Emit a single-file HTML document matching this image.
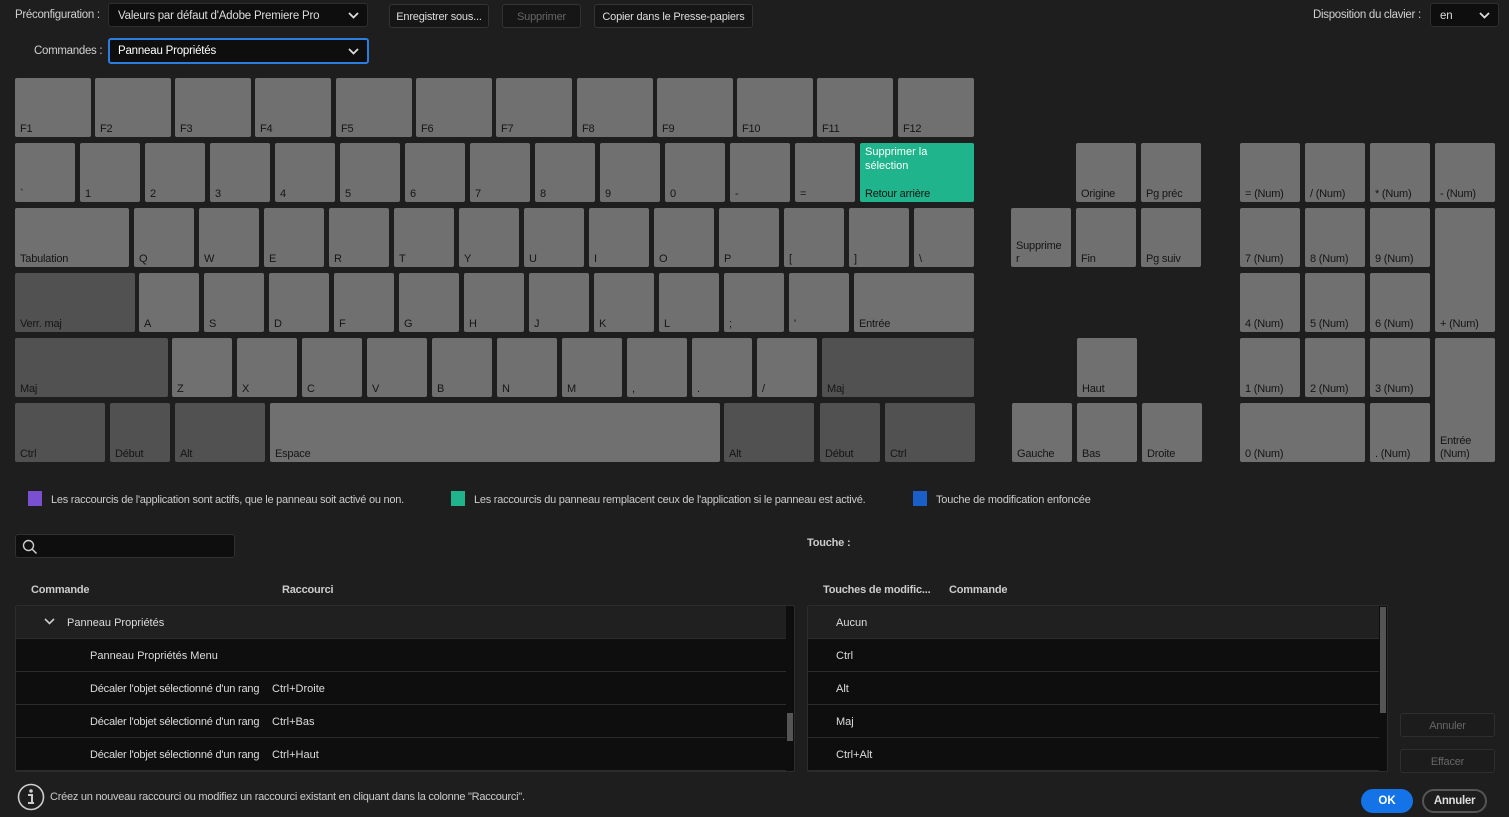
<!DOCTYPE html>
<html><head><meta charset="utf-8"><style>
*{box-sizing:border-box;margin:0;padding:0}
body{width:1509px;height:817px;background:#1e1e1e;font-family:"Liberation Sans",sans-serif;font-size:11px;color:#d0d0d0;position:relative;overflow:hidden}
.a{position:absolute}
.k{position:absolute;background:#707070;border-radius:2px;width:60px;height:59px}
.k span{position:absolute;left:5px;bottom:1px;line-height:13px;color:#151515;font-size:11px;letter-spacing:-.2px}
.d{background:#515151}
.w76{width:76px}
.dd{position:absolute;background:#0e0e0e;border:1px solid #2e2e2e;border-radius:3px;color:#ddd;font-size:11.5px;padding:6px 9px;height:24px;letter-spacing:-.2px}
.dd svg{position:absolute;right:8px;top:8px}
.btn{position:absolute;background:#161616;border:1px solid #333;border-radius:3px;color:#ddd;font-size:11px;text-align:center;line-height:24px;height:24px;letter-spacing:-.2px}
.row{position:absolute;left:0;right:8px;height:33px;border-bottom:1px solid #2c2c2c;background:#0e0e0e;color:#ddd;font-size:11px;line-height:34px}
.hd{font-weight:bold;color:#ccc;font-size:11px;letter-spacing:-.2px}
</style></head><body>
<div class="a" style="left:15px;top:9px;font-size:11.5px;letter-spacing:-.3px">Préconfiguration :</div>
<div class="dd" style="left:108px;top:3px;width:260px">Valeurs par défaut d'Adobe Premiere Pro<svg width="11" height="7"><path d="M1 1l4.5 4.5L10 1" stroke="#ddd" stroke-width="1.8" fill="none"/></svg></div>
<div class="btn" style="left:389px;top:4px;width:100px">Enregistrer sous...</div>
<div class="btn" style="left:502px;top:4px;width:79px;color:#666">Supprimer</div>
<div class="btn" style="left:594px;top:4px;width:159px">Copier dans le Presse-papiers</div>
<div class="a" style="left:1313px;top:9px;font-size:11.5px;letter-spacing:-.3px">Disposition du clavier :</div>
<div class="dd" style="left:1430px;top:3px;width:69px">en<svg width="11" height="7"><path d="M1 1l4.5 4.5L10 1" stroke="#ddd" stroke-width="1.8" fill="none"/></svg></div>
<div class="a" style="left:34px;top:45px;font-size:11.5px;letter-spacing:-.3px">Commandes :</div>
<div class="dd" style="left:108px;top:38px;width:261px;height:26px;border:2px solid #2b7de0;padding:5px 8px;color:#fff">Panneau Propriétés<svg width="11" height="7"><path d="M1 1l4.5 4.5L10 1" stroke="#ddd" stroke-width="1.8" fill="none"/></svg></div>

<div class="k w76" style="left:15px;top:78px"><span>F1</span></div>
<div class="k w76" style="left:95px;top:78px"><span>F2</span></div>
<div class="k w76" style="left:175px;top:78px"><span>F3</span></div>
<div class="k w76" style="left:255px;top:78px"><span>F4</span></div>
<div class="k w76" style="left:336px;top:78px"><span>F5</span></div>
<div class="k w76" style="left:416px;top:78px"><span>F6</span></div>
<div class="k w76" style="left:496px;top:78px"><span>F7</span></div>
<div class="k w76" style="left:577px;top:78px"><span>F8</span></div>
<div class="k w76" style="left:657px;top:78px"><span>F9</span></div>
<div class="k w76" style="left:737px;top:78px"><span>F10</span></div>
<div class="k w76" style="left:817px;top:78px"><span>F11</span></div>
<div class="k w76" style="left:898px;top:78px"><span>F12</span></div>

<div class="k" style="left:15px;top:143px"><span>`</span></div>
<div class="k" style="left:80px;top:143px"><span>1</span></div>
<div class="k" style="left:145px;top:143px"><span>2</span></div>
<div class="k" style="left:210px;top:143px"><span>3</span></div>
<div class="k" style="left:275px;top:143px"><span>4</span></div>
<div class="k" style="left:340px;top:143px"><span>5</span></div>
<div class="k" style="left:405px;top:143px"><span>6</span></div>
<div class="k" style="left:470px;top:143px"><span>7</span></div>
<div class="k" style="left:535px;top:143px"><span>8</span></div>
<div class="k" style="left:600px;top:143px"><span>9</span></div>
<div class="k" style="left:665px;top:143px"><span>0</span></div>
<div class="k" style="left:730px;top:143px"><span>-</span></div>
<div class="k" style="left:795px;top:143px"><span>=</span></div>
<div class="k" style="left:860px;top:143px;width:114px;background:#1fb48b"><div class="a" style="left:5px;top:2px;color:#fff;line-height:14px;font-size:11px">Supprimer la<br>sélection</div><span>Retour arrière</span></div>
<div class="k" style="left:1076px;top:143px"><span>Origine</span></div>
<div class="k" style="left:1141px;top:143px"><span>Pg préc</span></div>
<div class="k" style="left:1240px;top:143px"><span>= (Num)</span></div>
<div class="k" style="left:1305px;top:143px"><span>/ (Num)</span></div>
<div class="k" style="left:1370px;top:143px"><span>* (Num)</span></div>
<div class="k" style="left:1435px;top:143px"><span>- (Num)</span></div>

<div class="k" style="left:15px;top:208px;width:114px"><span>Tabulation</span></div>
<div class="k" style="left:134px;top:208px"><span>Q</span></div>
<div class="k" style="left:199px;top:208px"><span>W</span></div>
<div class="k" style="left:264px;top:208px"><span>E</span></div>
<div class="k" style="left:329px;top:208px"><span>R</span></div>
<div class="k" style="left:394px;top:208px"><span>T</span></div>
<div class="k" style="left:459px;top:208px"><span>Y</span></div>
<div class="k" style="left:524px;top:208px"><span>U</span></div>
<div class="k" style="left:589px;top:208px"><span>I</span></div>
<div class="k" style="left:654px;top:208px"><span>O</span></div>
<div class="k" style="left:719px;top:208px"><span>P</span></div>
<div class="k" style="left:784px;top:208px"><span>[</span></div>
<div class="k" style="left:849px;top:208px"><span>]</span></div>
<div class="k" style="left:914px;top:208px"><span>\</span></div>
<div class="k" style="left:1011px;top:208px"><span>Supprime<br>r</span></div>
<div class="k" style="left:1076px;top:208px"><span>Fin</span></div>
<div class="k" style="left:1141px;top:208px"><span>Pg suiv</span></div>
<div class="k" style="left:1240px;top:208px"><span>7 (Num)</span></div>
<div class="k" style="left:1305px;top:208px"><span>8 (Num)</span></div>
<div class="k" style="left:1370px;top:208px"><span>9 (Num)</span></div>
<div class="k" style="left:1435px;top:208px;height:124px"><span>+ (Num)</span></div>

<div class="k d" style="left:15px;top:273px;width:120px"><span>Verr. maj</span></div>
<div class="k" style="left:139px;top:273px"><span>A</span></div>
<div class="k" style="left:204px;top:273px"><span>S</span></div>
<div class="k" style="left:269px;top:273px"><span>D</span></div>
<div class="k" style="left:334px;top:273px"><span>F</span></div>
<div class="k" style="left:399px;top:273px"><span>G</span></div>
<div class="k" style="left:464px;top:273px"><span>H</span></div>
<div class="k" style="left:529px;top:273px"><span>J</span></div>
<div class="k" style="left:594px;top:273px"><span>K</span></div>
<div class="k" style="left:659px;top:273px"><span>L</span></div>
<div class="k" style="left:724px;top:273px"><span>;</span></div>
<div class="k" style="left:789px;top:273px"><span>'</span></div>
<div class="k" style="left:854px;top:273px;width:120px"><span>Entrée</span></div>
<div class="k" style="left:1240px;top:273px"><span>4 (Num)</span></div>
<div class="k" style="left:1305px;top:273px"><span>5 (Num)</span></div>
<div class="k" style="left:1370px;top:273px"><span>6 (Num)</span></div>

<div class="k d" style="left:15px;top:338px;width:153px"><span>Maj</span></div>
<div class="k" style="left:172px;top:338px"><span>Z</span></div>
<div class="k" style="left:237px;top:338px"><span>X</span></div>
<div class="k" style="left:302px;top:338px"><span>C</span></div>
<div class="k" style="left:367px;top:338px"><span>V</span></div>
<div class="k" style="left:432px;top:338px"><span>B</span></div>
<div class="k" style="left:497px;top:338px"><span>N</span></div>
<div class="k" style="left:562px;top:338px"><span>M</span></div>
<div class="k" style="left:627px;top:338px"><span>,</span></div>
<div class="k" style="left:692px;top:338px"><span>.</span></div>
<div class="k" style="left:757px;top:338px"><span>/</span></div>
<div class="k d" style="left:822px;top:338px;width:152px"><span>Maj</span></div>
<div class="k" style="left:1077px;top:338px"><span>Haut</span></div>
<div class="k" style="left:1240px;top:338px"><span>1 (Num)</span></div>
<div class="k" style="left:1305px;top:338px"><span>2 (Num)</span></div>
<div class="k" style="left:1370px;top:338px"><span>3 (Num)</span></div>
<div class="k" style="left:1435px;top:338px;height:124px"><span>Entrée<br>(Num)</span></div>

<div class="k d" style="left:15px;top:403px;width:90px"><span>Ctrl</span></div>
<div class="k d" style="left:110px;top:403px"><span>Début</span></div>
<div class="k d" style="left:175px;top:403px;width:90px"><span>Alt</span></div>
<div class="k" style="left:270px;top:403px;width:450px"><span>Espace</span></div>
<div class="k d" style="left:724px;top:403px;width:90px"><span>Alt</span></div>
<div class="k d" style="left:820px;top:403px"><span>Début</span></div>
<div class="k d" style="left:885px;top:403px;width:90px"><span>Ctrl</span></div>
<div class="k" style="left:1012px;top:403px"><span>Gauche</span></div>
<div class="k" style="left:1077px;top:403px"><span>Bas</span></div>
<div class="k" style="left:1142px;top:403px"><span>Droite</span></div>
<div class="k" style="left:1240px;top:403px;width:125px"><span>0 (Num)</span></div>
<div class="k" style="left:1370px;top:403px"><span>. (Num)</span></div>

<div class="a" style="left:28px;top:491px;width:14px;height:15px;background:#7b4fd2"></div>
<div class="a" style="left:51px;top:494px;font-size:11px;color:#ccc;letter-spacing:-.25px">Les raccourcis de l'application sont actifs, que le panneau soit activé ou non.</div>
<div class="a" style="left:451px;top:491px;width:14px;height:15px;background:#1fb48b"></div>
<div class="a" style="left:474px;top:494px;font-size:11px;color:#ccc;letter-spacing:-.25px">Les raccourcis du panneau remplacent ceux de l'application si le panneau est activé.</div>
<div class="a" style="left:913px;top:491px;width:14px;height:15px;background:#1a5fc8"></div>
<div class="a" style="left:936px;top:494px;font-size:11px;color:#ccc;letter-spacing:-.2px">Touche de modification enfoncée</div>

<div class="a" style="left:15px;top:534px;width:220px;height:24px;background:#0e0e0e;border:1px solid #303030;border-radius:3px"><svg class="a" style="left:6px;top:4px" width="16" height="16"><circle cx="6.5" cy="6.5" r="5" stroke="#ccc" stroke-width="1.4" fill="none"/><path d="M10 10l4.5 4.5" stroke="#ccc" stroke-width="1.5"/></svg></div>
<div class="a hd" style="left:807px;top:537px">Touche :</div>

<div class="a hd" style="left:31px;top:584px">Commande</div>
<div class="a hd" style="left:282px;top:584px">Raccourci</div>
<div class="a hd" style="left:823px;top:584px">Touches de modific...</div>
<div class="a hd" style="left:949px;top:584px">Commande</div>

<div class="a" style="left:15px;top:605px;width:780px;height:167px;border:1px solid #2c2c2c;border-radius:2px;overflow:hidden;background:#0e0e0e">
<div class="row" style="top:0;background:#202020"><svg class="a" style="left:28px;top:12px" width="11" height="7"><path d="M1 1l4.5 4.5L10 1" stroke="#ccc" stroke-width="1.6" fill="none"/></svg><span class="a" style="left:51px">Panneau Propriétés</span></div>
<div class="row" style="top:33px"><span class="a" style="left:74px">Panneau Propriétés Menu</span></div>
<div class="row" style="top:66px"><span class="a" style="left:74px;letter-spacing:-.2px">Décaler l'objet sélectionné d'un rang</span><span class="a" style="left:256px">Ctrl+Droite</span></div>
<div class="row" style="top:99px"><span class="a" style="left:74px;letter-spacing:-.2px">Décaler l'objet sélectionné d'un rang</span><span class="a" style="left:256px">Ctrl+Bas</span></div>
<div class="row" style="top:132px"><span class="a" style="left:74px;letter-spacing:-.2px">Décaler l'objet sélectionné d'un rang</span><span class="a" style="left:256px">Ctrl+Haut</span></div>
<div class="a" style="right:1px;top:107px;width:6px;height:28px;background:#555"></div>
</div>

<div class="a" style="left:807px;top:605px;width:581px;height:167px;border:1px solid #2c2c2c;border-radius:2px;overflow:hidden;background:#0e0e0e">
<div class="row" style="top:0;background:#202020"><span class="a" style="left:28px">Aucun</span></div>
<div class="row" style="top:33px"><span class="a" style="left:28px">Ctrl</span></div>
<div class="row" style="top:66px"><span class="a" style="left:28px">Alt</span></div>
<div class="row" style="top:99px"><span class="a" style="left:28px">Maj</span></div>
<div class="row" style="top:132px"><span class="a" style="left:28px">Ctrl+Alt</span></div>
<div class="a" style="right:1px;top:1px;width:6px;height:106px;background:#555"></div>
</div>

<div class="btn" style="left:1400px;top:713px;width:95px;color:#666;background:#1c1c1c;border-color:#2e2e2e">Annuler</div>
<div class="btn" style="left:1400px;top:749px;width:95px;color:#666;background:#1c1c1c;border-color:#2e2e2e">Effacer</div>

<svg class="a" style="left:17px;top:783px" width="28" height="28"><circle cx="14" cy="14" r="12.5" stroke="#ccc" stroke-width="1.6" fill="none"/><circle cx="14" cy="8" r="1.8" fill="#ccc"/><path d="M11 12h4v8h2M11 20h6" stroke="#ccc" stroke-width="2" fill="none"/></svg>
<div class="a" style="left:50px;top:791px;font-size:11px;color:#ccc;letter-spacing:-.25px">Créez un nouveau raccourci ou modifiez un raccourci existant en cliquant dans la colonne "Raccourci".</div>

<div class="a" style="left:1361px;top:789px;width:52px;height:24px;background:#1473e6;border-radius:12px;color:#fff;font-weight:bold;text-align:center;line-height:24px;font-size:11.5px">OK</div>
<div class="a" style="left:1422px;top:789px;width:65px;height:24px;border:2px solid #555;border-radius:12px;color:#ddd;font-weight:bold;text-align:center;line-height:20px;font-size:11.5px;letter-spacing:-.3px">Annuler</div>
</body></html>
